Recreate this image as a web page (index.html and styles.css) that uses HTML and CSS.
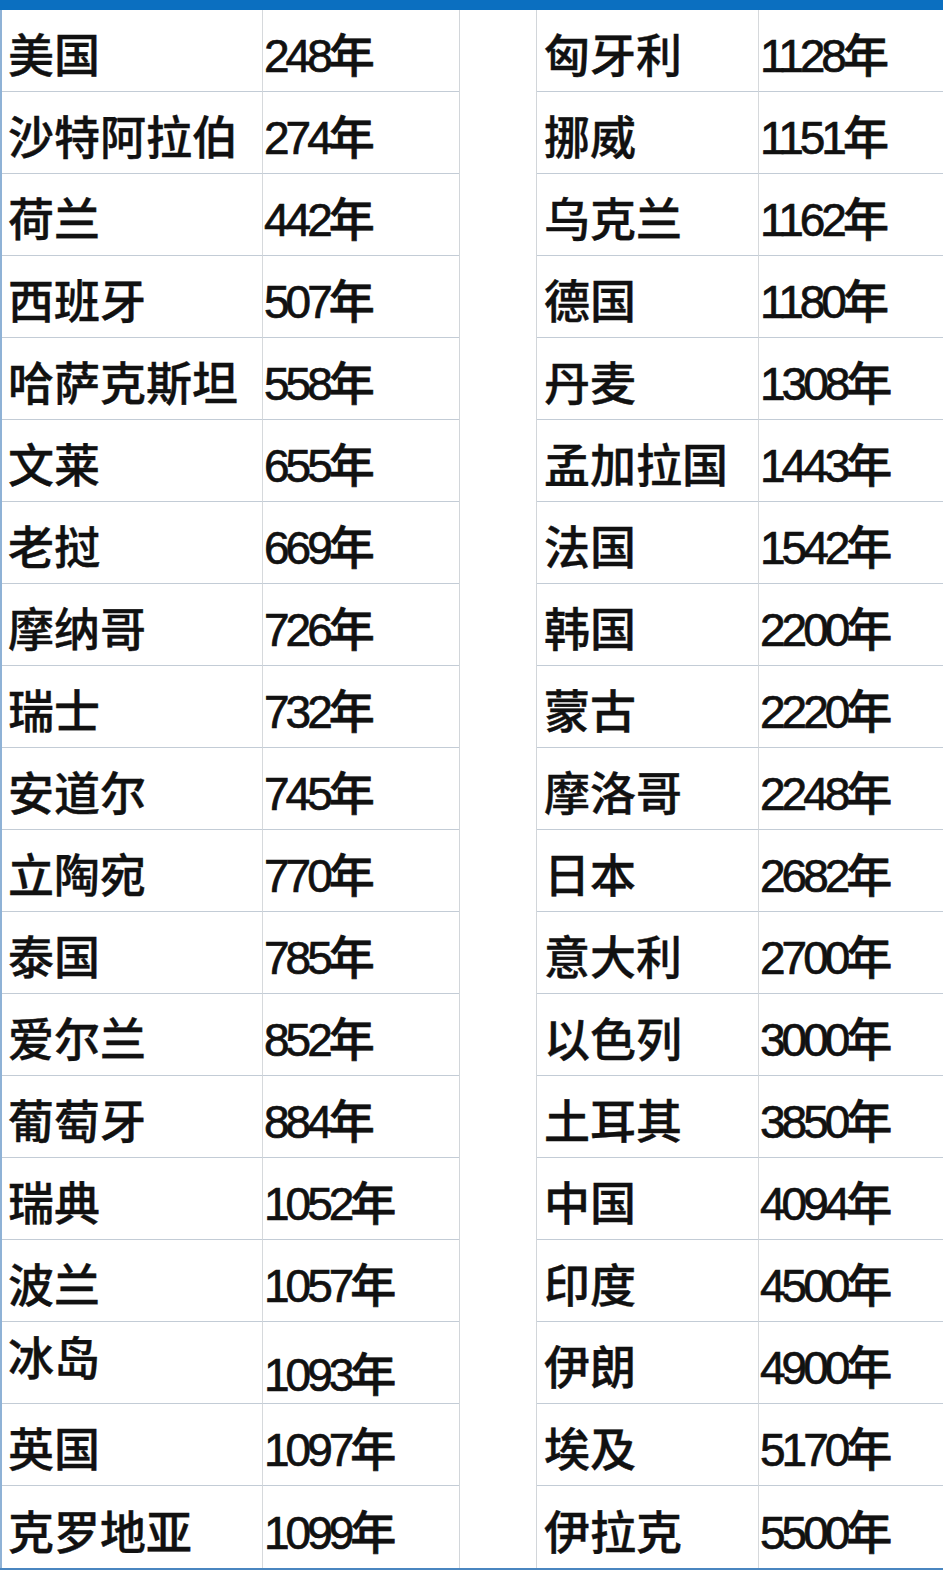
FILE: index.html
```html
<!DOCTYPE html>
<html lang="zh-CN">
<head>
<meta charset="utf-8">
<title>各国历史</title>
<link rel="stylesheet" href="styles.css">
</head>
<body>
<div class="page">
  <div class="topbar"></div>
  <div class="tables">
    <div class="table left">
      <div class="c name">美国</div><div class="c yr">248年</div>
      <div class="c name">沙特阿拉伯</div><div class="c yr">274年</div>
      <div class="c name">荷兰</div><div class="c yr">442年</div>
      <div class="c name">西班牙</div><div class="c yr">507年</div>
      <div class="c name">哈萨克斯坦</div><div class="c yr">558年</div>
      <div class="c name">文莱</div><div class="c yr">655年</div>
      <div class="c name">老挝</div><div class="c yr">669年</div>
      <div class="c name">摩纳哥</div><div class="c yr">726年</div>
      <div class="c name">瑞士</div><div class="c yr">732年</div>
      <div class="c name">安道尔</div><div class="c yr">745年</div>
      <div class="c name">立陶宛</div><div class="c yr">770年</div>
      <div class="c name">泰国</div><div class="c yr">785年</div>
      <div class="c name">爱尔兰</div><div class="c yr">852年</div>
      <div class="c name">葡萄牙</div><div class="c yr">884年</div>
      <div class="c name">瑞典</div><div class="c yr">1052年</div>
      <div class="c name">波兰</div><div class="c yr">1057年</div>
      <div class="c name top">冰岛</div><div class="c yr low">1093年</div>
      <div class="c name">英国</div><div class="c yr">1097年</div>
      <div class="c name">克罗地亚</div><div class="c yr">1099年</div>
    </div>
    <div class="table right">
      <div class="c name">匈牙利</div><div class="c yr">1128年</div>
      <div class="c name">挪威</div><div class="c yr">1151年</div>
      <div class="c name">乌克兰</div><div class="c yr">1162年</div>
      <div class="c name">德国</div><div class="c yr">1180年</div>
      <div class="c name">丹麦</div><div class="c yr">1308年</div>
      <div class="c name">孟加拉国</div><div class="c yr">1443年</div>
      <div class="c name">法国</div><div class="c yr">1542年</div>
      <div class="c name">韩国</div><div class="c yr">2200年</div>
      <div class="c name">蒙古</div><div class="c yr">2220年</div>
      <div class="c name">摩洛哥</div><div class="c yr">2248年</div>
      <div class="c name">日本</div><div class="c yr">2682年</div>
      <div class="c name">意大利</div><div class="c yr">2700年</div>
      <div class="c name">以色列</div><div class="c yr">3000年</div>
      <div class="c name">土耳其</div><div class="c yr">3850年</div>
      <div class="c name">中国</div><div class="c yr">4094年</div>
      <div class="c name">印度</div><div class="c yr">4500年</div>
      <div class="c name">伊朗</div><div class="c yr">4900年</div>
      <div class="c name">埃及</div><div class="c yr">5170年</div>
      <div class="c name">伊拉克</div><div class="c yr">5500年</div>
    </div>
  </div>
  <div class="bottombar"></div>
</div>
</body>
</html>
```

FILE: styles.css
```css
html, body {
  margin: 0;
  padding: 0;
  background: #ffffff;
}
.page {
  width: 943px;
  height: 1570px;
  overflow: hidden;
  display: flex;
  flex-direction: column;
  font-family: "Noto Sans CJK SC", "Liberation Sans", sans-serif;
  color: #111;
}
.topbar {
  height: 10px;
  background: #0b6fc0;
  flex: none;
}
.bottombar {
  height: 2px;
  background: #4a86c0;
  flex: none;
}
.tables {
  display: flex;
  gap: 76px;
  height: 1558px;
  flex: none;
  border-left: 2px solid #8fb2d6;
}
.table {
  display: grid;
  grid-auto-rows: 82px;
}
.table.left {
  grid-template-columns: 261px 196px;
  border-right: 1px solid #d2d6da;
}
.table.right {
  grid-template-columns: 222px 186px;
  border-left: 1px solid #d2d6da;
}
.c {
  display: flex;
  align-items: center;
  border-bottom: 1px solid #c3ccd6;
  box-sizing: border-box;
  padding-top: 3px;
  white-space: nowrap;
  overflow: hidden;
}
.table .c:nth-last-child(-n+2) {
  border-bottom: none;
}
.name {
  border-right: 1px solid #d6d9dc;
  padding-left: 6px;
  font-size: 46px;
  font-weight: 500;
  -webkit-text-stroke: 0.4px #111;
}
.right .name {
  padding-left: 7px;
}
.yr {
  padding-left: 1px;
  font-family: "Liberation Sans", "Noto Sans CJK SC", sans-serif;
  font-size: 46px;
  font-weight: 500;
  letter-spacing: -4px;
  -webkit-text-stroke: 0.7px #111;
}
.name.top {
  align-items: flex-start;
  padding-top: 0;
}
.yr.low {
  padding-top: 16px;
}
```
